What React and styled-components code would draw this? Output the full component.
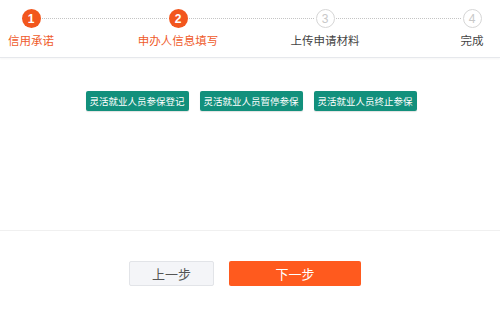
import React from "react";
import styled, { createGlobalStyle } from "styled-components";

const GlobalStyle = createGlobalStyle`
  html, body {
    margin: 0;
    padding: 0;
    background: #fff;
    font-family: "Microsoft YaHei", "Noto Sans CJK SC", "Liberation Sans", sans-serif;
  }
`;

const steps = [
  { label: "信用承诺", done: true },
  { label: "申办人信息填写", done: true },
  { label: "上传申请材料", done: false },
  { label: "完成", done: false },
];

const actions = ["灵活就业人员参保登记", "灵活就业人员暂停参保", "灵活就业人员终止参保"];

function App() {
  return (
    <>
      <GlobalStyle />
      <Page>
        <StepBar>
          {steps.map((step, i) => (
            <React.Fragment key={step.label}>
              {i > 0 && <Connector />}
              <Step>
                <Circle $active={step.done}>{i + 1}</Circle>
                <StepLabel $active={step.done}>{step.label}</StepLabel>
              </Step>
            </React.Fragment>
          ))}
        </StepBar>
        <Body>
          {actions.map(a => (
            <ActionButton key={a}>{a}</ActionButton>
          ))}
        </Body>
        <Footer>
          <PrevButton>上一步</PrevButton>
          <NextButton>下一步</NextButton>
        </Footer>
      </Page>
    </>
  );
}

const Page = styled.div`
  width: 500px;
  height: 310px;
  display: flex;
  flex-direction: column;
  background: #fff;
`;

const StepBar = styled.div`
  display: flex;
  align-items: flex-start;
  height: 58px;
  padding: 9px 28px 0 31px;
  box-sizing: border-box;
  border-bottom: 1px solid #e6e8ec;
  box-shadow: 0 1px 2px rgba(0, 0, 0, 0.04);
`;

const Step = styled.div`
  width: 0;
  display: flex;
  flex-direction: column;
  align-items: center;
  white-space: nowrap;
`;

const Circle = styled.div`
  width: 19px;
  height: 19px;
  flex: none;
  box-sizing: border-box;
  border-radius: 50%;
  display: flex;
  align-items: center;
  justify-content: center;
  font-family: "Liberation Sans", Arial, sans-serif;
  font-size: 12px;
  font-weight: ${p => (p.$active ? "bold" : "normal")};
  background: ${p => (p.$active ? "#f2561d" : "#fff")};
  color: ${p => (p.$active ? "#fff" : "#c8c8c8")};
  border: ${p => (p.$active ? "none" : "1.5px solid #d6d6d6")};
`;

const StepLabel = styled.div`
  margin-top: 4px;
  font-size: 11.5px;
  line-height: 16px;
  color: ${p => (p.$active ? "#ef5b2b" : "#444")};
`;

const Connector = styled.div`
  flex: 1;
  margin: 9px 11px 0;
  border-top: 1px dotted #c4c4c4;
`;

const Body = styled.div`
  height: 173px;
  display: flex;
  justify-content: center;
  align-items: flex-start;
  gap: 11px;
  padding-top: 33px;
  padding-left: 2px;
  box-sizing: border-box;
  border-bottom: 1px solid #f0f0f0;
`;

const ActionButton = styled.div`
  width: 103px;
  height: 20px;
  display: flex;
  align-items: center;
  justify-content: center;
  background: #12907c;
  color: #fff;
  font-size: 9.5px;
  border-radius: 2px;
  box-shadow: 0 1px 1px rgba(0, 0, 0, 0.12);
`;

const Footer = styled.div`
  display: flex;
  justify-content: center;
  gap: 15px;
  padding: 30px 10px 0 0;
`;

const FooterButton = styled.div`
  height: 25px;
  display: flex;
  align-items: center;
  justify-content: center;
  box-sizing: border-box;
  font-size: 13px;
  border-radius: 2px;
`;

const PrevButton = styled(FooterButton)`
  width: 85px;
  background: #f4f5f8;
  border: 1px solid #e2e4e8;
  color: #555;
`;

const NextButton = styled(FooterButton)`
  width: 132px;
  background: #ff5a1e;
  color: #fff;
`;

export default App;
